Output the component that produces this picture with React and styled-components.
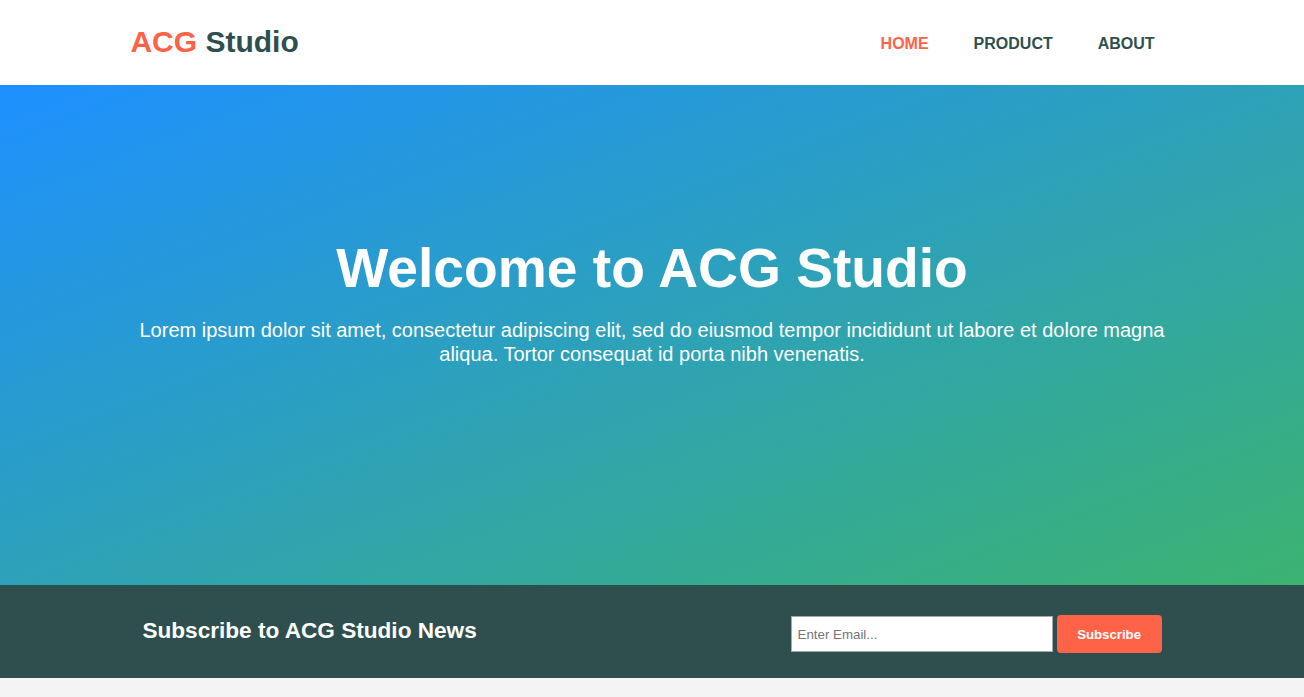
import React from "react";
import styled, { createGlobalStyle } from "styled-components";

const GlobalStyle = createGlobalStyle`
  * { box-sizing: border-box; }
  html, body { margin: 0; padding: 0; }
  body {
    background: #f4f4f4;
    font-family: "Liberation Sans", Arial, sans-serif;
    color: #2f4f4f;
  }
`;

const Container = styled.div`
  width: 80%;
  margin: 0 auto;
  padding: ${(p) => p.$pad || "0"};
`;

const Header = styled.header`
  background: #ffffff;
  height: 85px;
`;

const HeaderInner = styled(Container)`
  height: 100%;
  display: flex;
  align-items: center;
  justify-content: space-between;
`;

const Logo = styled.div`
  font-size: 30px;
  font-weight: bold;
  color: #2f4f4f;
  margin-top: -1px;
`;

const Accent = styled.span`
  color: #ff6347;
`;

const NavList = styled.nav`
  display: flex;
  gap: 45px;
  padding-right: 19px;
  padding-top: 3px;
`;

const NavLink = styled.a`
  font-size: 16px;
  font-weight: bold;
  text-decoration: none;
  text-transform: uppercase;
  color: ${(p) => (p.$active ? "#ff6347" : "#2f4f4f")};
  cursor: pointer;
`;

const Hero = styled.section`
  height: 500px;
  padding-top: 151px;
  background: linear-gradient(to bottom right, #1e90ff, #3cb371);
  color: #ffffff;
  text-align: center;
`;

const Title = styled.h1`
  margin: 0 0 19px;
  font-size: 55.2px;
  font-weight: bold;
  line-height: normal;
`;

const Lead = styled.p`
  margin: 0;
  font-size: 20px;
  line-height: 23.5px;
`;

const SubscribeBar = styled.section`
  background: #2f4f4f;
  height: 93px;
`;

const SubscribeInner = styled(Container)`
  height: 100%;
  display: flex;
  align-items: center;
  justify-content: space-between;
`;

const SubscribeTitle = styled.h2`
  margin: -1px 0 0;
  color: #ffffff;
  font-size: 22.6px;
  font-weight: bold;
`;

const Form = styled.form`
  display: flex;
  align-items: center;
  gap: 4px;
  margin-top: 5px;
`;

const EmailInput = styled.input`
  width: 262px;
  height: 36px;
  padding: 0 6px;
  border: 1px solid #a9a9a9;
  background: #ffffff;
  font-family: "Liberation Sans", Arial, sans-serif;
  font-size: 13.3px;
  outline: none;
  &::placeholder { color: #757575; }
`;

const Button = styled.button`
  height: 38px;
  width: 105px;
  border: none;
  border-radius: 4px;
  background: #ff6347;
  color: #ffffff;
  font-family: "Liberation Sans", Arial, sans-serif;
  font-size: 13.2px;
  font-weight: bold;
  cursor: pointer;
`;

export default function App() {
  return (
    <>
      <GlobalStyle />
      <Header>
        <HeaderInner>
          <Logo>
            <Accent>ACG</Accent> Studio
          </Logo>
          <NavList>
            <NavLink $active>Home</NavLink>
            <NavLink>Product</NavLink>
            <NavLink>About</NavLink>
          </NavList>
        </HeaderInner>
      </Header>
      <Hero>
        <Container>
          <Title>Welcome to ACG Studio</Title>
          <Lead>
            Lorem ipsum dolor sit amet, consectetur adipiscing elit, sed do eiusmod tempor
            incididunt ut labore et dolore magna aliqua. Tortor consequat id porta nibh venenatis.
          </Lead>
        </Container>
      </Hero>
      <SubscribeBar>
        <SubscribeInner $pad="0 12px">
          <SubscribeTitle>Subscribe to ACG Studio News</SubscribeTitle>
          <Form onSubmit={(e) => e.preventDefault()}>
            <EmailInput type="email" placeholder="Enter Email..." />
            <Button type="submit">Subscribe</Button>
          </Form>
        </SubscribeInner>
      </SubscribeBar>
    </>
  );
}
